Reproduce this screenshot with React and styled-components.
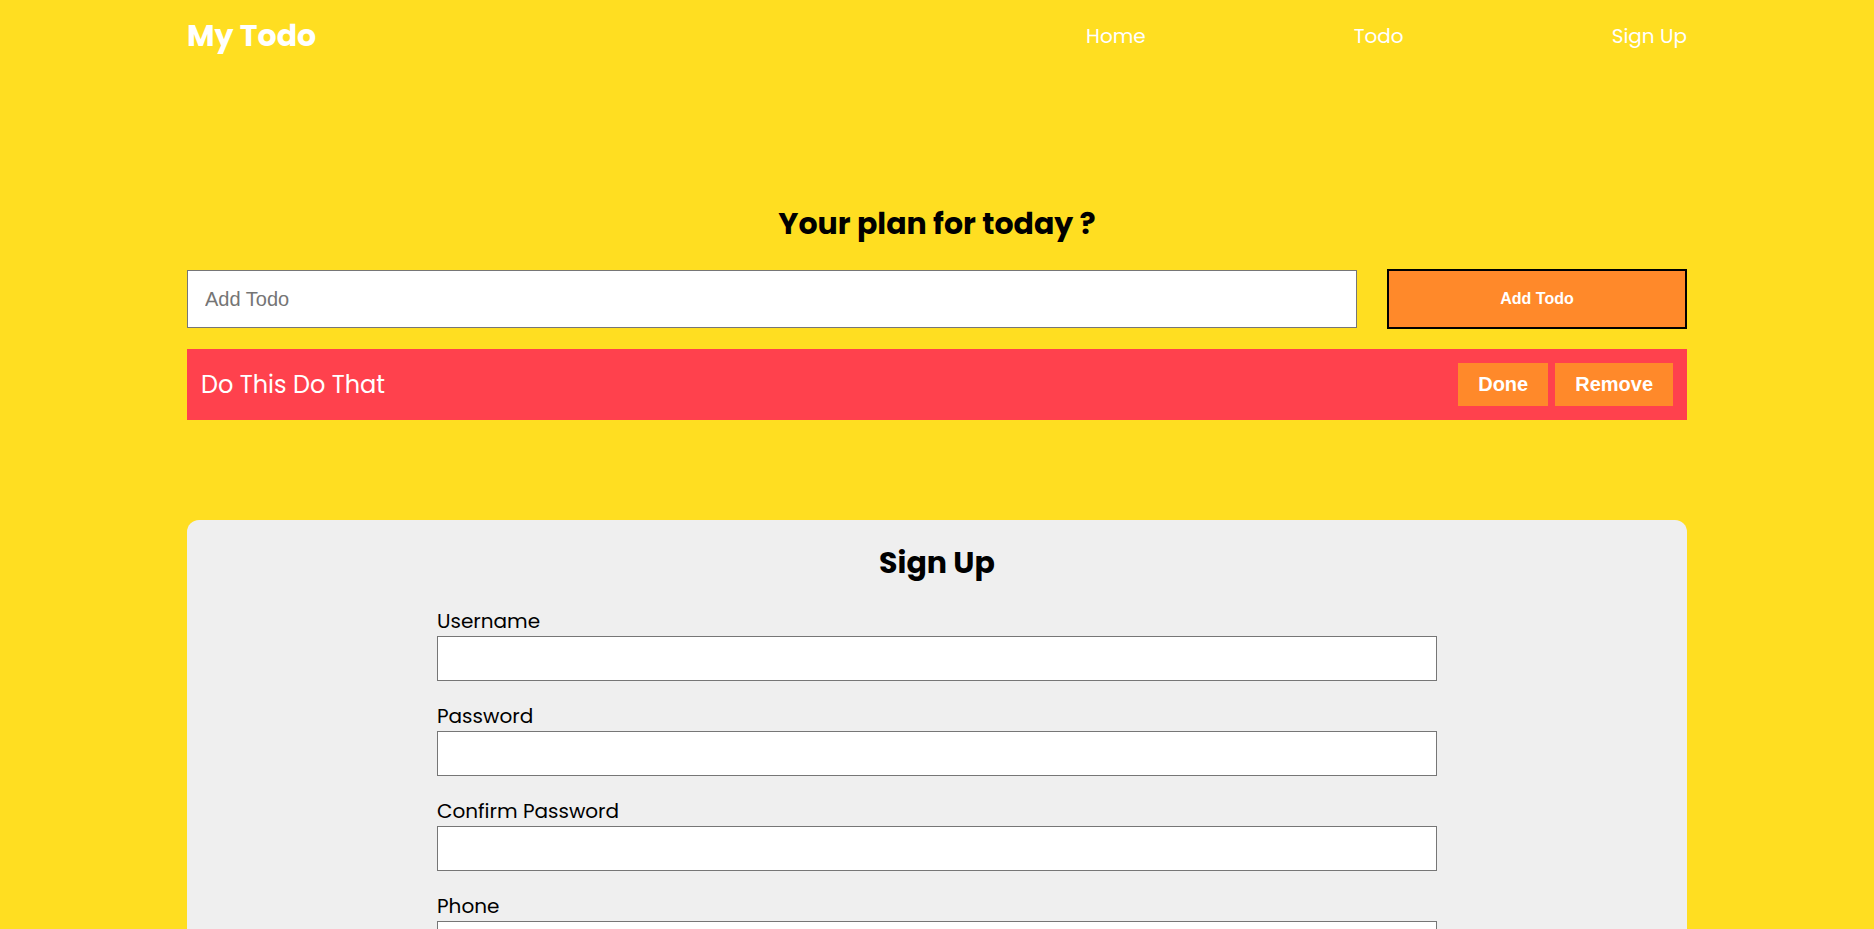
import styled, { createGlobalStyle } from "styled-components";

const GlobalStyle = createGlobalStyle`
  body {
    margin: 0;
    background-color: #ffde21;
    font-family: "Poppins", "Inter", sans-serif;
  }
`;

const Header = styled.header`
  width: 1500px;
  height: 72px;
  margin: 0 auto;
  display: flex;
  justify-content: space-between;
  align-items: center;
`;

const Logo = styled.h1`
  margin: 0;
  font-size: 30px;
  font-weight: 700;
  color: #fff;
`;

const Nav = styled.nav`
  display: flex;
  gap: 208px;
`;

const NavLink = styled.a`
  color: #fff;
  font-size: 20px;
  text-decoration: none;
  cursor: pointer;
`;

const Main = styled.main`
  width: 1500px;
  margin: 0 auto;
  padding-top: 131px;
`;

const Heading = styled.h2`
  margin: 0 0 24px;
  text-align: center;
  font-size: 30px;
  line-height: 42px;
  font-weight: 700;
  color: #000;
`;

const TodoForm = styled.form`
  display: flex;
  align-items: center;
  gap: 30px;
`;

const TodoInput = styled.input`
  flex: 1;
  height: 58px;
  box-sizing: border-box;
  border: 1px solid #767676;
  padding: 0 17px;
  font-size: 20px;
  font-family: "Liberation Sans", Arial, sans-serif;
  &::placeholder {
    color: #757575;
  }
`;

const AddButton = styled.button`
  width: 300px;
  height: 60px;
  border: 2px solid #000;
  background-color: #ff892a;
  color: #fff;
  font-family: "Liberation Sans", Arial, sans-serif;
  font-weight: 700;
  font-size: 16px;
  cursor: pointer;
`;

const TodoItem = styled.div`
  margin-top: 20px;
  height: 71px;
  padding: 0 14px;
  background-color: #ff414d;
  display: flex;
  justify-content: space-between;
  align-items: center;
`;

const TodoText = styled.span`
  color: #fff;
  font-size: 24px;
`;

const Actions = styled.div`
  display: flex;
  gap: 7px;
`;

const SmallButton = styled.button`
  height: 43px;
  padding: 0 20px;
  border: none;
  background-color: #ff892a;
  color: #fff;
  font-family: "Liberation Sans", Arial, sans-serif;
  font-weight: 700;
  font-size: 20px;
  cursor: pointer;
`;

const Card = styled.section`
  margin-top: 100px;
  background-color: #efefef;
  border-radius: 12px;
  padding: 20px 0 40px;
`;

const CardTitle = styled.h2`
  margin: 0 0 22px;
  text-align: center;
  font-size: 30px;
  line-height: 45px;
  font-weight: 700;
  color: #000;
`;

const Field = styled.div`
  width: 1000px;
  margin: 0 auto 21px;
  display: flex;
  flex-direction: column;
  gap: 1px;
`;

const Label = styled.label`
  font-size: 20px;
  line-height: 28px;
  color: #000;
`;

const Input = styled.input`
  height: 45px;
  box-sizing: border-box;
  border: 1px solid #767676;
  font-size: 18px;
  padding: 0 10px;
`;

const fields = ["Username", "Password", "Confirm Password", "Phone"];

const App = () => {
  return (
    <>
      <GlobalStyle />
      <Header>
        <Logo>My Todo</Logo>
        <Nav>
          <NavLink>Home</NavLink>
          <NavLink>Todo</NavLink>
          <NavLink>Sign Up</NavLink>
        </Nav>
      </Header>
      <Main>
        <Heading>Your plan for today ?</Heading>
        <TodoForm onSubmit={(e) => e.preventDefault()}>
          <TodoInput placeholder="Add Todo" />
          <AddButton type="submit">Add Todo</AddButton>
        </TodoForm>
        <TodoItem>
          <TodoText>Do This Do That</TodoText>
          <Actions>
            <SmallButton>Done</SmallButton>
            <SmallButton>Remove</SmallButton>
          </Actions>
        </TodoItem>
        <Card>
          <CardTitle>Sign Up</CardTitle>
          {fields.map((name) => (
            <Field key={name}>
              <Label>{name}</Label>
              <Input type={name.includes("Password") ? "password" : "text"} />
            </Field>
          ))}
        </Card>
      </Main>
    </>
  );
};

export default App;
